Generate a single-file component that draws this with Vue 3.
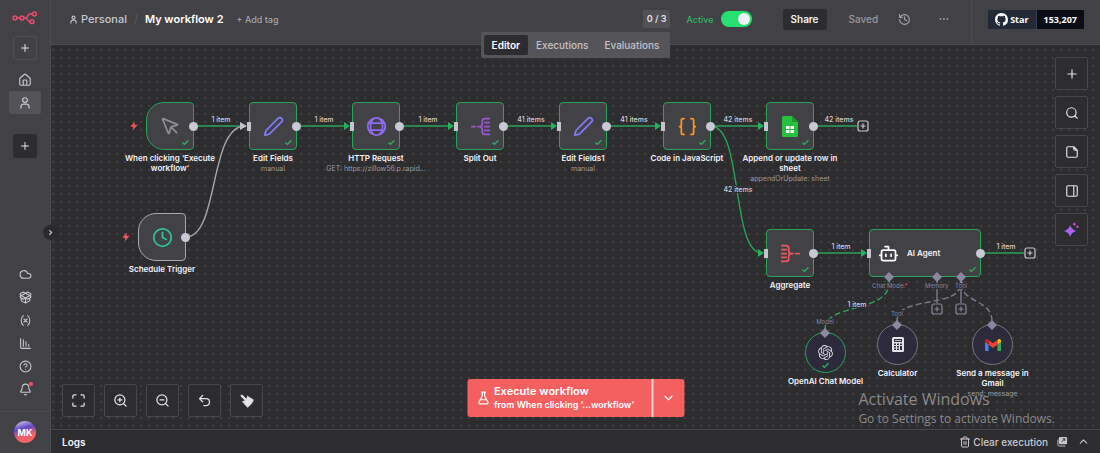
<script setup>
import { ref } from 'vue'

const circle = (cx, cy, r) => `M${cx - r} ${cy}a${r} ${r} 0 1 0 ${2 * r} 0a${r} ${r} 0 1 0 ${-2 * r} 0`

const icons = {
  plus: 'M5 12h14M12 5v14',
  home: 'M15 21v-8a1 1 0 0 0-1-1h-4a1 1 0 0 0-1 1v8M3 10a2 2 0 0 1 .709-1.528l7-5.999a2 2 0 0 1 2.582 0l7 5.999A2 2 0 0 1 21 10v9a2 2 0 0 1-2 2H5a2 2 0 0 1-2-2z',
  user: circle(12, 7, 4) + 'M5 21v-2a5 5 0 0 1 5-5h4a5 5 0 0 1 5 5v2',
  cloud: 'M17.5 19H9a7 7 0 1 1 6.71-9h1.79a4.5 4.5 0 1 1 0 9Z',
  box: 'M12 22v-9M15.17 2.21a1.67 1.67 0 0 1 1.63 0L21 4.57a1.93 1.93 0 0 1 0 3.36L8.82 14.79a1.655 1.655 0 0 1-1.64 0L3 12.43a1.93 1.93 0 0 1 0-3.36zM20 13v3.87a2.06 2.06 0 0 1-1.11 1.83l-6 3.08a1.93 1.93 0 0 1-1.78 0l-6-3.08A2.06 2.06 0 0 1 4 16.87V13M21 12.43a1.93 1.93 0 0 0 0-3.36L8.83 2.2a1.64 1.64 0 0 0-1.63 0L3 4.57a1.93 1.93 0 0 0 0 3.36l12.18 6.86a1.636 1.636 0 0 0 1.63 0z',
  variable: 'M8 21s-4-3-4-9 4-9 4-9M16 3s4 3 4 9-4 9-4 9M15 9l-6 6M9 9l6 6',
  chart: 'M3 3v16a2 2 0 0 0 2 2h16M8 17V5M13 17V9M18 17v-3',
  help: circle(12, 12, 10) + 'M9.09 9a3 3 0 0 1 5.83 1c0 2-3 3-3 3M12 17h.01',
  bell: 'M10.268 21a2 2 0 0 0 3.464 0M3.262 15.326A1 1 0 0 0 4 17h16a1 1 0 0 0 .74-1.673C19.41 13.956 18 12.499 18 8A6 6 0 0 0 6 8c0 4.499-1.411 5.956-2.738 7.326',
  chevronRight: 'm9 18 6-6-6-6',
  chevronDown: 'm6 9 6 6 6-6',
  chevronUp: 'm18 15-6-6-6 6',
  history: 'M3 12a9 9 0 1 0 9-9 9.75 9.75 0 0 0-6.74 2.74L3 8M3 3v5h5M12 7v5l4 2',
  more: circle(5, 12, 1) + circle(12, 12, 1) + circle(19, 12, 1),
  search: circle(11, 11, 8) + 'M21 21l-4.3-4.3',
  note: 'M15 3H5a2 2 0 0 0-2 2v14a2 2 0 0 0 2 2h14a2 2 0 0 0 2-2V9ZM15 3v4a2 2 0 0 0 2 2h4',
  panel: 'M5 3h14a2 2 0 0 1 2 2v14a2 2 0 0 1-2 2H5a2 2 0 0 1-2-2V5a2 2 0 0 1 2-2zM15 3v18',
  fit: 'M3 8V5a2 2 0 0 1 2-2h3M16 3h3a2 2 0 0 1 2 2v3M21 16v3a2 2 0 0 1-2 2h-3M8 21H5a2 2 0 0 1-2-2v-3',
  zoomIn: circle(11, 11, 8) + 'M21 21l-4.3-4.3M11 8v6M8 11h6',
  zoomOut: circle(11, 11, 8) + 'M21 21l-4.3-4.3M8 11h6',
  undo: 'M9 14 4 9l5-5M4 9h10.5a5.5 5.5 0 0 1 0 11H11',
  flask: 'M14 2v6a2 2 0 0 0 .245.96l5.51 10.08A2 2 0 0 1 18 22H6a2 2 0 0 1-1.755-2.96l5.51-10.08A2 2 0 0 0 10 8V2M6.453 15h11.094M8.5 2h7',
  trash: 'M3 6h18M19 6v14a2 2 0 0 1-2 2H7a2 2 0 0 1-2-2V6M8 6V4a2 2 0 0 1 2-2h4a2 2 0 0 1 2 2v2M10 11v6M14 11v6',
  check: 'M20 6 9 17l-5-5',
  cursor: 'M12.586 12.586 19 19M3.688 3.037a.497.497 0 0 0-.651.651l6.5 15.999a.501.501 0 0 0 .947-.062l1.569-6.083a2 2 0 0 1 1.448-1.479l6.124-1.579a.5.5 0 0 0 .063-.947z',
  clock: circle(12, 12, 10) + 'M12 6v6l4 2',
  pencil: 'M21.174 6.812a1 1 0 0 0-3.986-3.987L3.842 16.174a2 2 0 0 0-.5.83l-1.321 4.352a.5.5 0 0 0 .623.622l4.353-1.32a2 2 0 0 0 .83-.497z',
  globe: circle(12, 12, 10) + 'M12 2a7 10 0 0 0 0 20a7 10 0 0 0 0-20M3 8h18M3 16h18',
  split: 'M2 12h4M9 12h2c2 0 3-1 3-3V6c0-2 1-3 3-3h5M11 12c2 0 3 1 3 3v3c0 2 1 3 3 3h5M17 7.500h5M17 12h5M17 16.500h5',
  merge: 'M22 12h-4M15 12h-2c-2 0-3-1-3-3V6c0-2-1-3-3-3H2M13 12c-2 0-3 1-3 3v3c0 2-1 3-3 3H2M2 7.500h5M2 12h5M2 16.500h5',
  braces: 'M8 3H7a2 2 0 0 0-2 2v5a2 2 0 0 1-2 2 2 2 0 0 1 2 2v5c0 1.100.900 2 2 2h1M16 21h1a2 2 0 0 0 2-2v-5c0-1.100.900-2 2-2a2 2 0 0 1-2-2V5a2 2 0 0 0-2-2h-1',
  bot: 'M12 8V4H8M6 8h12a2 2 0 0 1 2 2v8a2 2 0 0 1-2 2H6a2 2 0 0 1-2-2v-8a2 2 0 0 1 2-2zM2 14h2M20 14h2M15 13v2M9 13v2',
}

const bolt = 'M14 1 3 14h7l-1 9 12-14h-8z'
const openai = 'M22.2819 9.8211a5.9847 5.9847 0 0 0-.5157-4.9108 6.0462 6.0462 0 0 0-6.5098-2.9A6.0651 6.0651 0 0 0 4.9807 4.1818a5.9847 5.9847 0 0 0-3.9977 2.9 6.0462 6.0462 0 0 0 .7427 7.0966 5.98 5.98 0 0 0 .511 4.9107 6.051 6.051 0 0 0 6.5146 2.9001A5.9847 5.9847 0 0 0 13.2599 24a6.0557 6.0557 0 0 0 5.7718-4.2058 5.9894 5.9894 0 0 0 3.9977-2.9001 6.0557 6.0557 0 0 0-.7475-7.0729zm-9.022 12.6081a4.4755 4.4755 0 0 1-2.8764-1.0408l.1419-.0804 4.7783-2.7582a.7948.7948 0 0 0 .3927-.6813v-6.7369l2.02 1.1686a.071.071 0 0 1 .038.052v5.5826a4.504 4.504 0 0 1-4.4945 4.4944zm-9.6607-4.1254a4.4708 4.4708 0 0 1-.5346-3.0137l.142.0852 4.783 2.7582a.7712.7712 0 0 0 .7806 0l5.8428-3.3685v2.3324a.0804.0804 0 0 1-.0332.0615L9.74 19.9502a4.4992 4.4992 0 0 1-6.1408-1.6464zM2.3408 7.8956a4.485 4.485 0 0 1 2.3655-1.9728V11.6a.7664.7664 0 0 0 .3879.6765l5.8144 3.3543-2.0201 1.1685a.0757.0757 0 0 1-.071 0l-4.8303-2.7865A4.504 4.504 0 0 1 2.3408 7.872zm16.5963 3.8558L13.1038 8.364 15.1192 7.2a.0757.0757 0 0 1 .071 0l4.8303 2.7913a4.4944 4.4944 0 0 1-.6765 8.1042v-5.6772a.79.79 0 0 0-.407-.667zm2.0107-3.0231l-.142-.0852-4.7735-2.7818a.7759.7759 0 0 0-.7854 0L9.409 9.2297V6.8974a.0662.0662 0 0 1 .0284-.0615l4.8303-2.7866a4.4992 4.4992 0 0 1 6.6802 4.66zM8.3065 12.863l-2.02-1.1638a.0804.0804 0 0 1-.038-.0567V6.0742a4.4992 4.4992 0 0 1 7.3757-3.4537l-.142.0805L8.704 5.459a.7948.7948 0 0 0-.3927.6813zm1.0976-2.3654l2.602-1.4998 2.6069 1.4998v2.9994l-2.5974 1.4997-2.6067-1.4997Z'
const github = 'M8 0C3.58 0 0 3.58 0 8c0 3.54 2.29 6.53 5.47 7.59.4.07.55-.17.55-.38 0-.19-.01-.82-.01-1.49-2.01.37-2.53-.49-2.69-.94-.09-.23-.48-.94-.82-1.13-.28-.15-.68-.52-.01-.53.63-.01 1.08.58 1.23.82.72 1.21 1.87.87 2.33.66.07-.52.28-.87.51-1.07-1.78-.2-3.64-.89-3.64-3.95 0-.87.31-1.59.82-2.15-.08-.2-.36-1.02.08-2.12 0 0 .67-.21 2.2.82.64-.18 1.32-.27 2-.27s1.36.09 2 .27c1.53-1.04 2.2-.82 2.2-.82.44 1.1.16 1.92.08 2.12.51.56.82 1.27.82 2.15 0 3.07-1.87 3.75-3.65 3.95.29.25.54.73.54 1.48 0 1.07-.01 1.93-.01 2.2 0 .21.15.46.55.38A8.01 8.01 0 0 0 16 8c0-4.42-3.58-8-8-8'

// Node positions are canvas coordinates of the top left corner.
const nodes = [
  { x: 95, y: 57, name: 'When clicking ‘Execute workflow’', icon: 'cursor', color: '#8f8e94', trigger: true, done: true, out: true },
  { x: 87, y: 168, name: 'Schedule Trigger', icon: 'clock', color: '#31c49f', trigger: true, out: true },
  { x: 198, y: 57, name: 'Edit Fields', sub: 'manual', icon: 'pencil', color: '#7f7cf5', done: true, in: true, out: true },
  { x: 301, y: 57, name: 'HTTP Request', sub: 'GET: https://zillow56.p.rapid...', icon: 'globe', color: '#8f6cf2', done: true, in: true, out: true },
  { x: 405, y: 57, name: 'Split Out', icon: 'split', color: '#9b56d3', done: true, in: true, out: true },
  { x: 508, y: 57, name: 'Edit Fields1', sub: 'manual', icon: 'pencil', color: '#7f7cf5', done: true, in: true, out: true },
  { x: 612, y: 57, name: 'Code in JavaScript', icon: 'braces', color: '#ff9922', done: true, in: true, out: true },
  { x: 715, y: 57, name: 'Append or update row in sheet', sub: 'appendOrUpdate: sheet', icon: 'sheets', done: true, in: true, out: true },
  { x: 715, y: 184, name: 'Aggregate', icon: 'merge', color: '#f2545b', done: true, in: true, out: true },
  { x: 818, y: 184, name: 'AI Agent', icon: 'bot', color: '#ffffff', wide: true, done: true, in: true, out: true },
  { x: 754, y: 287, name: 'OpenAI Chat Model', icon: 'openai', round: true, done: true },
  { x: 826, y: 279, name: 'Calculator', icon: 'calculator', round: true },
  { x: 921, y: 279, name: 'Send a message in Gmail', sub: 'send: message', icon: 'gmail', round: true },
]

const edges = [
  { d: 'M143 81H194', arrow: [198, 81] },
  { d: 'M246 81H297', arrow: [301, 81] },
  { d: 'M349 81H401', arrow: [405, 81] },
  { d: 'M453 81H504', arrow: [508, 81] },
  { d: 'M556 81H607', arrow: [612, 81] },
  { d: 'M660 81H711', arrow: [715, 81] },
  { d: 'M763 81H806' },
  { d: 'M660 81C692 81 680 208 711 208', arrow: [715, 208] },
  { d: 'M763 208H814', arrow: [818, 208] },
  { d: 'M930 208H973' },
]

const edgeLabels = [
  { x: 170, y: 77, text: '1 item' },
  { x: 273, y: 77, text: '1 item' },
  { x: 377, y: 77, text: '1 item' },
  { x: 480, y: 77, text: '41 items' },
  { x: 583, y: 77, text: '41 items' },
  { x: 687, y: 77, text: '42 items' },
  { x: 788, y: 77, text: '42 items' },
  { x: 687, y: 147, text: '42 items' },
  { x: 790, y: 204, text: '1 item' },
  { x: 955, y: 204, text: '1 item' },
  { x: 806, y: 262, text: '1 item' },
]

const diamonds = [[838, 232], [886, 232], [910, 232], [774, 288], [846, 280], [941, 280]]
const portLabels = [
  { x: 874, y: 243, text: 'Memory', anchor: 'start' },
  { x: 904, y: 243, text: 'Tool', anchor: 'start' },
  { x: 774, y: 279, text: 'Model', anchor: 'middle' },
  { x: 846, y: 271, text: 'Tool', anchor: 'middle' },
]
const addPoints = [
  { x: 812, y: 81 },
  { x: 979, y: 208 },
  { x: 886, y: 264, dim: true },
  { x: 910, y: 264, dim: true },
]

const footerNav = [
  ['cloud', 'Admin panel'],
  ['box', 'Templates'],
  ['variable', 'Variables'],
  ['chart', 'Insights'],
  ['help', 'Help'],
  ['bell', 'What is new'],
]
const zoomTools = [
  ['fit', 'Fit to view'],
  ['zoomIn', 'Zoom in'],
  ['zoomOut', 'Zoom out'],
  ['undo', 'Reset zoom'],
  ['broom', 'Tidy up'],
]
const sideTools = [
  ['plus', 'Add node'],
  ['search', 'Search nodes'],
  ['note', 'Add sticky note'],
  ['panel', 'Toggle panel'],
  ['sparkle', 'Assistant'],
]
const tabs = ['Editor', 'Executions', 'Evaluations']
const tab = ref('Editor')
const active = ref(true)

const place = (n) => ({ left: n.x + 'px', top: n.y + 'px' })
</script>

<template>
  <div class="app">
    <aside class="sidebar">
      <svg class="logo" viewBox="0 0 26 14" aria-label="n8n">
        <g fill="none" stroke="#ea4b71" stroke-width="1.500">
          <circle cx="3" cy="7" r="1.900" />
          <circle cx="10" cy="7" r="1.900" />
          <circle cx="22.500" cy="3" r="1.900" />
          <circle cx="20" cy="10.700" r="1.900" />
          <path d="M5 7h3M12 7h1.500c3 0 1.500-4 4.500-4h2.500M13.500 7c2.500 0 1.500 3.700 4.500 3.700" />
        </g>
      </svg>
      <button class="square outlined" aria-label="Create"><svg class="i12" viewBox="0 0 24 24"><path :d="icons.plus" /></svg></button>
      <nav class="nav">
        <a href="#" aria-label="Overview"><svg class="i14" viewBox="0 0 24 24"><path :d="icons.home" /></svg></a>
        <a href="#" class="current" aria-label="Personal"><svg class="i14" viewBox="0 0 24 24"><path :d="icons.user" /></svg></a>
      </nav>
      <button class="square dark" aria-label="Add project"><svg class="i12" viewBox="0 0 24 24"><path :d="icons.plus" /></svg></button>
      <nav class="nav foot">
        <a v-for="[icon, label] in footerNav" :key="icon" href="#" :aria-label="label">
          <svg class="i13" viewBox="0 0 24 24"><path :d="icons[icon]" /></svg>
          <i v-if="icon === 'bell'" class="alert"></i>
        </a>
      </nav>
      <div class="account"><button class="avatar">MK</button></div>
      <button class="collapse" aria-label="Expand sidebar"><svg viewBox="0 0 24 24"><path :d="icons.chevronRight" /></svg></button>
    </aside>

    <div class="main">
      <header class="topbar">
        <div class="crumbs">
          <a href="#" class="owner"><svg class="i9" viewBox="0 0 24 24"><path :d="icons.user" /></svg>Personal</a>
          <span class="slash">/</span>
          <span class="title">My workflow 2</span>
          <button class="tag">+ Add tag</button>
        </div>
        <div class="actions">
          <span class="count">0 / 3</span>
          <label class="switch">Active<input v-model="active" type="checkbox" role="switch"></label>
          <button class="share">Share</button>
          <span class="saved">Saved</span>
          <button class="plain" aria-label="History"><svg class="i13" viewBox="0 0 24 24"><path :d="icons.history" /></svg></button>
          <button class="plain more" aria-label="More"><svg class="i12" viewBox="0 0 24 24"><path :d="icons.more" /></svg></button>
        </div>
        <div class="github">
          <a href="#" class="star"><svg viewBox="0 0 16 16"><path :d="github" /></svg>Star</a>
          <a href="#" class="stars">153,207</a>
        </div>
        <div class="tabs">
          <button v-for="t in tabs" :key="t" :class="{ on: t === tab }" @click="tab = t">{{ t }}</button>
        </div>
      </header>

      <main class="canvas">
        <svg class="wires">
          <g fill="none" stroke-width="1.400">
            <path v-for="e in edges" :key="e.d" :d="e.d" stroke="#2aa35b" />
            <path d="M135 192C168 192 158 81 194 81" stroke="#aaa9b0" />
            <path d="M774 284C774 258 838 268 838 238" stroke="#2aa35b" stroke-dasharray="6 3" />
            <path d="M846 276C846 250 910 264 910 238M941 276C941 254 910 258 910 238" stroke="#7e7b91" stroke-dasharray="6 3" />
            <path d="M886 236V258M910 236V258" stroke="#7e7b91" />
          </g>
          <path d="M189 77L196 81L189 85Z" fill="#c5c4cc" />
          <template v-for="e in edges" :key="e.d">
            <path v-if="e.arrow && e.arrow[0] !== 198" :d="`M${e.arrow[0] - 8} ${e.arrow[1] - 4}l6 4l-6 4z`" fill="#22b35c" />
          </template>
          <path d="M835 240L838 234L841 240Z" fill="#22b35c" />
          <path d="M907 240L910 234L913 240Z" fill="#8b87a0" />
          <g v-for="p in addPoints" :key="p.x" fill="#2d2c2f" :stroke="p.dim ? '#8b87a0' : '#c9c8d0'" stroke-width="1.200">
            <rect :x="p.x - 5" :y="p.y - 5" width="10" height="10" rx="2" />
            <path :d="`M${p.x - 2.5} ${p.y}h5M${p.x} ${p.y - 2.5}v5`" />
          </g>
          <text v-for="l in edgeLabels" :key="l.x + '-' + l.y" class="wire-label" :x="l.x" :y="l.y" text-anchor="middle">{{ l.text }}</text>
        </svg>

        <div v-for="n in nodes" :key="n.name" class="node" :class="{ trigger: n.trigger, done: n.done, wide: n.wide, round: n.round }" :style="place(n)">
          <div class="shape">
            <svg v-if="n.icon === 'openai'" class="brand" viewBox="0 0 24 24" fill="#d9d8de"><path :d="openai" /></svg>
            <svg v-else-if="n.icon === 'sheets'" class="sheets" viewBox="0 0 16 21">
              <path d="M1.500 0H10l6 6v13.500a1.500 1.500 0 0 1-1.500 1.500h-13A1.500 1.500 0 0 1 0 19.500v-18A1.500 1.500 0 0 1 1.500 0z" fill="#28c13f" />
              <path d="M10 0l6 6h-6z" fill="#159a2c" />
              <path d="M4 10h8v7H4z" fill="#fff" />
              <path d="M4 13.500h8M8 10v7" stroke="#28c13f" stroke-width="1" />
            </svg>
            <svg v-else-if="n.icon === 'gmail'" class="gmail" viewBox="52 42 88 66">
              <path fill="#4285f4" d="M58 108h14V74L52 59v43c0 3.320 2.690 6 6 6" />
              <path fill="#34a853" d="M120 108h14c3.320 0 6-2.690 6-6V59l-20 15" />
              <path fill="#fbbc04" d="M120 48v26l20-15v-8c0-7.420-8.470-11.650-14.400-7.200" />
              <path fill="#ea4335" d="M72 74V48l24 18 24-18v26L96 92" />
              <path fill="#c5221f" d="M52 51v8l20 15V48l-5.600-4.200c-5.940-4.450-14.400-.22-14.400 7.200" />
            </svg>
            <svg v-else-if="n.icon === 'calculator'" class="calculator" viewBox="0 0 12 15">
              <rect x="0" y="0" width="12" height="15" rx="1.500" fill="#e4e3ea" />
              <path d="M2 2h8v3H2zM2 6.500h2v1.500H2zM5 6.500h2v1.500H5zM8 6.500h2v1.500H8zM2 9h2v1.500H2zM5 9h2v1.500H5zM8 9h2v4H8zM2 11.500h2V13H2zM5 11.500h2V13H5z" fill="#2d2a3c" />
              <path d="M3 3.500h6" stroke="#e4e3ea" stroke-width=".8" />
            </svg>
            <svg v-else class="glyph" viewBox="0 0 24 24" :stroke="n.color"><path :d="icons[n.icon]" /></svg>
            <svg v-if="n.done" class="check" viewBox="0 0 24 24"><path :d="icons.check" /></svg>
            <span v-if="n.wide" class="inner-name">{{ n.name }}</span>
            <i v-if="n.in" class="port-in"></i>
            <i v-if="n.out" class="port-out"></i>
            <svg v-if="n.trigger" class="bolt" viewBox="0 0 24 24"><path :d="bolt" /></svg>
          </div>
          <div v-if="!n.wide" class="caption">
            <div class="name">{{ n.name }}</div>
            <div v-if="n.sub" class="sub">{{ n.sub }}</div>
          </div>
        </div>

        <svg class="wires">
          <path v-for="d in diamonds" :key="d[0]" :d="`M${d[0]} ${d[1] - 5}l5 5l-5 5l-5-5z`" fill="#8b87a0" />
          <text class="port-label" x="821" y="243">Chat Model<tspan fill="#ff4d5e">*</tspan></text>
          <text v-for="l in portLabels" :key="l.x" class="port-label" :x="l.x" :y="l.y" :text-anchor="l.anchor">{{ l.text }}</text>
        </svg>

        <div class="tools zoom-tools">
          <button v-for="[icon, label] in zoomTools" :key="icon" :aria-label="label">
            <svg v-if="icon === 'broom'" class="i14" viewBox="0 0 24 24">
              <path d="M3 3l6 6" stroke-width="4" />
              <path d="M13 4l10 6c-1 5-6 10-10 13L4 13c4 0 8-4 9-9z" fill="currentColor" stroke-width="1" />
            </svg>
            <svg v-else class="i15" viewBox="0 0 24 24"><path :d="icons[icon]" /></svg>
          </button>
        </div>

        <div class="run">
          <button class="execute">
            <svg class="i14" viewBox="0 0 24 24"><path :d="icons.flask" /></svg>
            <span><b>Execute workflow</b><small>from When clicking ‘...workflow’</small></span>
          </button>
          <button class="choose" aria-label="Choose trigger"><svg class="i14" viewBox="0 0 24 24"><path :d="icons.chevronDown" /></svg></button>
        </div>

        <div class="tools side-tools">
          <button v-for="[icon, label] in sideTools" :key="icon" :aria-label="label">
            <svg v-if="icon === 'sparkle'" class="sparkle" viewBox="0 0 16 16">
              <defs>
                <linearGradient id="spark" x1="0" y1="0" x2="1" y2="0"><stop offset="0" stop-color="#8f6cff" /><stop offset="1" stop-color="#c35be0" /></linearGradient>
              </defs>
              <path d="M6.500 3q1 5 6.500 6.500q-5.500 1.500-6.500 6.500q-1-5-6.500-6.500q5.500-1.500 6.500-6.500z" fill="url(#spark)" />
              <path d="M11 0l.7 1.500 1.500.7-1.500.7L11 4.500l-.7-1.600-1.500-.7 1.500-.7z" fill="#c35be0" />
              <circle cx="14.300" cy="5" r="1.300" fill="#c94fb8" />
            </svg>
            <svg v-else class="i14" viewBox="0 0 24 24"><path :d="icons[icon]" /></svg>
          </button>
        </div>

        <div class="watermark">
          <p class="big">Activate Windows</p>
          <p>Go to Settings to activate Windows.</p>
        </div>
      </main>

      <footer class="logs">
        <button class="logs-title">Logs</button>
        <button class="clear"><svg class="i12" viewBox="0 0 24 24"><path :d="icons.trash" /></svg>Clear execution</button>
        <button aria-label="Pop out">
          <svg class="popout" viewBox="0 0 12 12">
            <path d="M3.500 1h6A1.500 1.500 0 0 1 11 2.500v5A1.500 1.500 0 0 1 9.500 9h-6A1.500 1.500 0 0 1 2 7.500v-5A1.500 1.500 0 0 1 3.500 1z" fill="currentColor" />
            <path d="M1 4v5.500A1.500 1.500 0 0 0 2.500 11H9" fill="none" stroke="currentColor" />
            <path d="M5 6.500L8.500 3M6 3h2.500v2.500" fill="none" stroke="#2d2c2f" />
          </svg>
        </button>
        <button aria-label="Open logs"><svg class="i13" viewBox="0 0 24 24"><path :d="icons.chevronUp" /></svg></button>
      </footer>
    </div>
  </div>
</template>

<style>
body {
  margin: 0;
  background: #2d2c2f;
}
</style>

<style scoped>
.app {
  display: flex;
  min-height: 100vh;
  font-family: Inter, "Liberation Sans", sans-serif;
  font-size: 11px;
  color: #c9c8d0;
}
button {
  display: flex;
  align-items: center;
  justify-content: center;
  margin: 0;
  padding: 0;
  border: 0;
  background: none;
  color: inherit;
  font: inherit;
}
a {
  color: inherit;
  text-decoration: none;
}
svg {
  display: block;
  flex: none;
}
.i9, .i12, .i13, .i14, .i15 {
  fill: none;
  stroke: currentColor;
  stroke-width: 2;
  stroke-linecap: round;
  stroke-linejoin: round;
}
.i9 { width: 9px; height: 9px; stroke-width: 3; }
.i12 { width: 12px; height: 12px; }
.i13 { width: 13px; height: 13px; }
.i14 { width: 14px; height: 14px; }
.i15 { width: 15px; height: 15px; }

/* Sidebar */
.sidebar {
  position: relative;
  box-sizing: border-box;
  width: 51px;
  flex: none;
  display: flex;
  flex-direction: column;
  align-items: center;
  padding-top: 11px;
  background: #424145;
  border-right: 1px solid #4c4b50;
}
.logo { width: 26px; height: 14px; }
.square {
  width: 24px;
  height: 24px;
  margin-top: 11px;
  border-radius: 2px;
  color: #e4e3ea;
}
.outlined { box-sizing: border-box; border: 1px solid #504f54; }
.dark { margin-top: 20px; background: #2d2c2f; }
.nav {
  display: flex;
  flex-direction: column;
  margin-top: 8px;
}
.nav a {
  position: relative;
  display: flex;
  align-items: center;
  justify-content: center;
  width: 32px;
  height: 23px;
  border-radius: 2px;
}
.nav a.current { background: #545358; }
.foot { margin-top: auto; padding-bottom: 10px; }
.alert {
  position: absolute;
  top: 4px;
  right: 8px;
  width: 4px;
  height: 4px;
  border-radius: 50%;
  background: #ff4d5e;
}
.account {
  align-self: stretch;
  display: flex;
  justify-content: center;
  padding: 9px 0 10px;
  border-top: 1px solid #4c4b50;
}
.avatar {
  width: 22px;
  height: 22px;
  border-radius: 50%;
  background: linear-gradient(165deg, #b9a9dd 10%, #5f48c8 35%, #f0606a 62%, #ff6a6a);
  color: #fff;
  font-size: 9px;
  font-weight: 700;
}
.collapse {
  position: absolute;
  z-index: 2;
  top: 225px;
  right: -8px;
  width: 15px;
  height: 15px;
  border-radius: 50%;
  background: #2a292c;
}
.collapse svg {
  width: 9px;
  height: 9px;
  fill: none;
  stroke: currentColor;
  stroke-width: 3;
}

/* Top bar */
.main {
  flex: 1;
  min-width: 0;
  display: flex;
  flex-direction: column;
}
.topbar {
  position: relative;
  z-index: 1;
  box-sizing: border-box;
  height: 45px;
  display: flex;
  align-items: center;
  padding-bottom: 6px;
  background: #424145;
  border-bottom: 1px solid #4c4b50;
}
.crumbs {
  flex: 1;
  display: flex;
  align-items: center;
  padding-left: 18px;
  white-space: nowrap;
}
.owner { display: flex; align-items: center; gap: 3px; font-weight: 500; }
.slash { margin: 0 7px; color: #5e5d63; }
.title { font-weight: 600; color: #fff; }
.tag { margin-left: 13px; font-size: 9px; font-weight: 500; color: #a5a4ab; }
.actions {
  display: flex;
  align-items: center;
  white-space: nowrap;
}
.count {
  padding: 2px 4px;
  border-radius: 2px;
  background: #525156;
  color: #e4e3ea;
  font-weight: 600;
  font-size: 9px;
  line-height: 14px;
}
.switch {
  display: flex;
  align-items: center;
  gap: 7px;
  margin-left: 16px;
  font-size: 9px;
  font-weight: 500;
  color: #2fb765;
}
.switch input {
  appearance: none;
  display: flex;
  align-items: center;
  justify-content: flex-start;
  box-sizing: border-box;
  width: 31px;
  height: 16px;
  margin: 0;
  padding: 2px;
  border-radius: 8px;
  background: #6b6a70;
}
.switch input::before {
  content: "";
  width: 12px;
  height: 12px;
  border-radius: 50%;
  background: #f1f0f6;
}
.switch input:checked { justify-content: flex-end; background: #27e070; }
.share {
  height: 21px;
  margin-left: 31px;
  padding: 0 8px;
  border-radius: 2px;
  background: #2d2c2f;
  color: #f1f0f6;
  font-size: 10px;
  font-weight: 600;
}
.saved { margin-left: 22px; font-size: 10px; font-weight: 500; color: #9b9aa1; }
.plain { margin-left: 20px; color: #a5a4ab; }
.more { margin-left: 27px; }
.github {
  align-self: stretch;
  display: flex;
  align-items: center;
  margin: 0 16px -6px 21px;
  padding: 0 0 6px 16px;
  border-left: 1px solid #4c4b50;
  font-family: "Open Sans", "Noto Sans", sans-serif;
  font-size: 9px;
  font-weight: 700;
  color: #fff;
}
.github a {
  display: flex;
  align-items: center;
  height: 19px;
  padding: 0 7px;
  background: #0a0c16;
}
.github .star { gap: 2px; background: #242937; border-right: 1px solid #3a3f4d; }
.star svg { width: 13px; height: 13px; fill: #fff; }
.tabs {
  position: absolute;
  left: 50%;
  top: 32px;
  transform: translateX(-50%);
  display: flex;
  padding: 3px;
  border-radius: 2px;
  background: #555459;
}
.tabs button {
  height: 20px;
  padding: 0 8px;
  border-radius: 2px;
  color: #c3c2ca;
  font-size: 10px;
  font-weight: 500;
}
.tabs .on { background: #2d2c2f; color: #fff; font-weight: 600; }

/* Canvas */
.canvas {
  position: relative;
  flex: 1;
  min-height: 340px;
  overflow: hidden;
  background: #2d2c2f radial-gradient(circle at 1px 1px, #403f43 0 1px, transparent 1px) 1px 4px / 8px 8px;
}
.wires {
  position: absolute;
  inset: 0;
  width: 100%;
  height: 100%;
  pointer-events: none;
}
.wire-label {
  font-size: 7px;
  font-weight: 500;
  fill: #d3d2d9;
  stroke: #2d2c2f;
  stroke-width: 2px;
  paint-order: stroke;
}
.port-label {
  font-size: 6px;
  fill: #8b87a0;
  stroke: #2d2c2f;
  stroke-width: 2px;
  paint-order: stroke;
}
.node { position: absolute; width: 48px; }
.shape {
  position: relative;
  box-sizing: border-box;
  display: flex;
  align-items: center;
  justify-content: center;
  height: 48px;
  border: 1px solid #aaa9b0;
  border-radius: 4px;
  background: #424145;
}
.done .shape { border-color: #2aa35b; }
.trigger .shape { border-radius: 18px 4px 4px 18px; }
.wide { width: 112px; }
.wide .shape { justify-content: flex-start; padding-left: 8px; gap: 8px; }
.inner-name { font-size: 8px; font-weight: 600; color: #f5f4fa; }
.round { width: 41px; }
.round .shape { height: 41px; border-radius: 50%; border-color: #77757f; background: #2d2a3c; }
.round.done .shape { border-color: #2aa35b; }
.glyph {
  width: 21px;
  height: 21px;
  fill: none;
  stroke-width: 2;
  stroke-linecap: round;
  stroke-linejoin: round;
}
.brand { width: 15px; height: 15px; }
.sheets { width: 16px; height: 21px; }
.gmail { width: 16px; height: 12px; }
.calculator { width: 12px; height: 15px; }
.check {
  position: absolute;
  right: 3px;
  bottom: 2px;
  width: 9px;
  height: 9px;
  fill: none;
  stroke: #2fb765;
  stroke-width: 3;
}
.round .check { right: 15px; bottom: 2px; }
.port-in {
  position: absolute;
  left: -3px;
  top: 19px;
  width: 4px;
  height: 9px;
  background: #c5c4cc;
}
.port-out {
  position: absolute;
  right: -5px;
  top: 19px;
  width: 9px;
  height: 9px;
  border-radius: 50%;
  background: #c9c8d4;
}
.bolt {
  position: absolute;
  left: -18px;
  top: 18px;
  width: 10px;
  height: 10px;
  fill: #f2545b;
}
.caption {
  width: 100px;
  margin: 3px 0 0 50%;
  transform: translateX(-50%);
  text-align: center;
}
.round .caption { width: 88px; }
.name {
  font-size: 8px;
  line-height: 10px;
  font-weight: 600;
  color: #f5f4fa;
}
.sub {
  margin-top: 1px;
  font-size: 7px;
  line-height: 10px;
  color: #9b9aa1;
  white-space: nowrap;
}
.tools { position: absolute; display: flex; }
.tools button {
  box-sizing: border-box;
  width: 33px;
  height: 33px;
  border: 1px solid #48474b;
  border-radius: 2px;
  background: #2d2c2f;
  color: #e4e3ea;
}
.zoom-tools { left: 11px; bottom: 12px; gap: 9px; }
.side-tools { right: 12px; top: 12px; flex-direction: column; gap: 6px; }
.sparkle { width: 15px; height: 15px; }
.run {
  position: absolute;
  left: 50%;
  bottom: 12px;
  transform: translateX(-50%);
  display: flex;
  height: 38px;
  border-radius: 3px;
  overflow: hidden;
  background: #f46060;
  color: #fff;
}
.execute { gap: 4px; padding: 0 17px 0 9px; text-align: left; white-space: nowrap; }
.execute b, .execute small { display: block; font-weight: 600; line-height: 13px; }
.execute b { font-size: 11px; }
.execute small { font-size: 9px; }
.choose { width: 33px; border-left: 2px solid #fbd3d3; }
.watermark {
  position: absolute;
  right: 45px;
  bottom: 0;
  color: #8b8a8d;
  font-family: "Open Sans", "Noto Sans", sans-serif;
  font-size: 12px;
  line-height: 20px;
  white-space: nowrap;
  pointer-events: none;
}
.watermark p { margin: 0; }
.watermark .big { font-size: 16px; }

/* Logs */
.logs {
  display: flex;
  align-items: center;
  gap: 9px;
  height: 23px;
  padding: 0 10px 0 11px;
  border-top: 1px solid #48474b;
  background: #2d2c2f;
  font-size: 10px;
  font-weight: 500;
}
.logs-title { margin-right: auto; color: #f5f4fa; font-weight: 600; }
.clear { gap: 2px; }
.popout { width: 11px; height: 11px; }
</style>
